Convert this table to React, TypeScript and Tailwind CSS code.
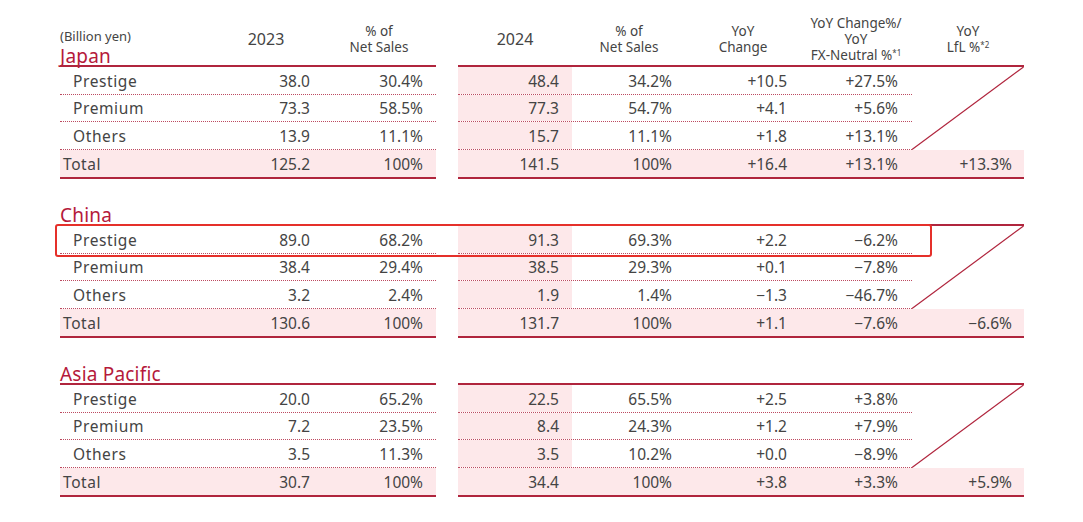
import React from 'react'

type Row = { label: string; v23: string; p23: string; v24: string; p24: string; chg: string; fx: string }
type Section = { title: string; rows: Row[]; total: Row & { lfl: string } }

const SECTIONS: Section[] = [
  {
    title: 'Japan',
    rows: [
      { label: 'Prestige', v23: '38.0', p23: '30.4%', v24: '48.4', p24: '34.2%', chg: '+10.5', fx: '+27.5%' },
      { label: 'Premium', v23: '73.3', p23: '58.5%', v24: '77.3', p24: '54.7%', chg: '+4.1', fx: '+5.6%' },
      { label: 'Others', v23: '13.9', p23: '11.1%', v24: '15.7', p24: '11.1%', chg: '+1.8', fx: '+13.1%' },
    ],
    total: { label: 'Total', v23: '125.2', p23: '100%', v24: '141.5', p24: '100%', chg: '+16.4', fx: '+13.1%', lfl: '+13.3%' },
  },
  {
    title: 'China',
    rows: [
      { label: 'Prestige', v23: '89.0', p23: '68.2%', v24: '91.3', p24: '69.3%', chg: '+2.2', fx: '−6.2%' },
      { label: 'Premium', v23: '38.4', p23: '29.4%', v24: '38.5', p24: '29.3%', chg: '+0.1', fx: '−7.8%' },
      { label: 'Others', v23: '3.2', p23: '2.4%', v24: '1.9', p24: '1.4%', chg: '−1.3', fx: '−46.7%' },
    ],
    total: { label: 'Total', v23: '130.6', p23: '100%', v24: '131.7', p24: '100%', chg: '+1.1', fx: '−7.6%', lfl: '−6.6%' },
  },
  {
    title: 'Asia Pacific',
    rows: [
      { label: 'Prestige', v23: '20.0', p23: '65.2%', v24: '22.5', p24: '65.5%', chg: '+2.5', fx: '+3.8%' },
      { label: 'Premium', v23: '7.2', p23: '23.5%', v24: '8.4', p24: '24.3%', chg: '+1.2', fx: '+7.9%' },
      { label: 'Others', v23: '3.5', p23: '11.3%', v24: '3.5', p24: '10.2%', chg: '+0.0', fx: '−8.9%' },
    ],
    total: { label: 'Total', v23: '30.7', p23: '100%', v24: '34.4', p24: '100%', chg: '+3.8', fx: '+3.3%', lfl: '+5.9%' },
  },
]

const LINE = 'border-[#b0253d]'
const DOT = 'border-b border-dotted border-[#bd4a60]'

function Title({ children }: { children: React.ReactNode }) {
  return (
    <div className="h-[22px] pt-[2px] text-[19px] leading-[22px] tracking-[0.2px] text-[#b5193b]">{children}</div>
  )
}

function SectionTable({ s, highlight }: { s: Section; highlight?: boolean }) {
  return (
    <div className="relative flex gap-[22px]">
      {/* left: 2023 */}
      <div className={`w-[376px] border-t-2 border-b-2 ${LINE}`}>
        {s.rows.map((r) => (
          <div key={r.label} className={`flex h-[27.5px] items-center pt-[2px] ${DOT}`}>
            <div className="w-[150px] pl-[13px] tracking-[0.6px]">{r.label}</div>
            <div className="w-[112px] pr-[12px] text-right">{r.v23}</div>
            <div className="w-[114px] pr-[13px] text-right">{r.p23}</div>
          </div>
        ))}
        <div className="flex h-[27.5px] items-center bg-[#fde8ea] pt-[2px]">
          <div className="w-[150px] pl-[3px] tracking-[0.6px]">{s.total.label}</div>
          <div className="w-[112px] pr-[12px] text-right">{s.total.v23}</div>
          <div className="w-[114px] pr-[13px] text-right">{s.total.p23}</div>
        </div>
      </div>

      {/* right: 2024 */}
      <div className={`relative w-[566px] border-t-2 border-b-2 ${LINE}`}>
        {s.rows.map((r) => (
          <div key={r.label} className="flex h-[27.5px]">
            <div className={`flex w-[454px] items-center ${DOT}`}>
              <div className="flex h-full w-[114px] items-center justify-end bg-[#fde8ea] pr-[13px] pt-[2px]">{r.v24}</div>
              <div className="w-[114px] pr-[14px] pt-[2px] text-right">{r.p24}</div>
              <div className="w-[114px] pr-[13px] pt-[2px] text-right">{r.chg}</div>
              <div className="w-[112px] pr-[14px] pt-[2px] text-right">{r.fx}</div>
            </div>
            <div className="w-[112px]" />
          </div>
        ))}
        <div className="flex h-[27.5px] items-center bg-[#fde8ea] pt-[2px]">
          <div className="w-[114px] pr-[13px] text-right">{s.total.v24}</div>
          <div className="w-[114px] pr-[14px] text-right">{s.total.p24}</div>
          <div className="w-[114px] pr-[13px] text-right">{s.total.chg}</div>
          <div className="w-[112px] pr-[14px] text-right">{s.total.fx}</div>
          <div className="w-[112px] pr-[12px] text-right">{s.total.lfl}</div>
        </div>
        <svg className="absolute right-0 top-0 h-[82.5px] w-[112px]" viewBox="0 0 112 82.5" preserveAspectRatio="none">
          <line x1="111.5" y1="0" x2="0" y2="82.5" stroke="#b0253d" strokeWidth="1.2" />
        </svg>
      </div>

      {highlight && (
        <div className="absolute left-[-5px] top-0 h-[33px] w-[877px] rounded-[3px] border-[2.5px] border-[#e5302a]" />
      )}
    </div>
  )
}

export default function App() {
  return (
    <div
      className="min-h-[522px] w-[1083px] bg-white pl-[60px] text-[15.5px] text-[#444444]"
      style={{ fontFamily: '"Noto Sans", "Open Sans", sans-serif' }}
    >
      {/* header */}
      <div className="flex h-[65px] gap-[22px]">
        <div className="flex w-[376px]">
          <div className="flex w-[150px] flex-col justify-end">
            <div className="text-[13px] leading-[13px]">(Billion yen)</div>
            <Title>Japan</Title>
          </div>
          <div className="flex w-[112px] items-center justify-center pt-[13px] text-[16px]">2023</div>
          <div className="flex w-[114px] flex-col items-center justify-center pt-[13px] text-[13.5px] leading-[16px]">
            <span>% of</span>
            <span>Net Sales</span>
          </div>
        </div>
        <div className="flex w-[566px] pt-[13px] text-[13.5px] leading-[16px]">
          <div className="flex w-[114px] items-center justify-center text-[16px]">2024</div>
          <div className="flex w-[114px] flex-col items-center justify-center">
            <span>% of</span>
            <span>Net Sales</span>
          </div>
          <div className="flex w-[114px] flex-col items-center justify-center">
            <span>YoY</span>
            <span>Change</span>
          </div>
          <div className="flex w-[112px] flex-col items-center justify-center whitespace-nowrap">
            <span>YoY Change%/</span>
            <span>YoY</span>
            <span>
              FX-Neutral %<sup className="text-[8px]">*1</sup>
            </span>
          </div>
          <div className="flex w-[112px] flex-col items-center justify-center">
            <span>YoY</span>
            <span>
              LfL %<sup className="text-[8px]">*2</sup>
            </span>
          </div>
        </div>
      </div>

      <SectionTable s={SECTIONS[0]} />

      <div className="mt-[23px]">
        <Title>{SECTIONS[1].title}</Title>
        <SectionTable s={SECTIONS[1]} highlight />
      </div>

      <div className="mt-[23px]">
        <Title>{SECTIONS[2].title}</Title>
        <SectionTable s={SECTIONS[2]} />
      </div>
    </div>
  )
}
